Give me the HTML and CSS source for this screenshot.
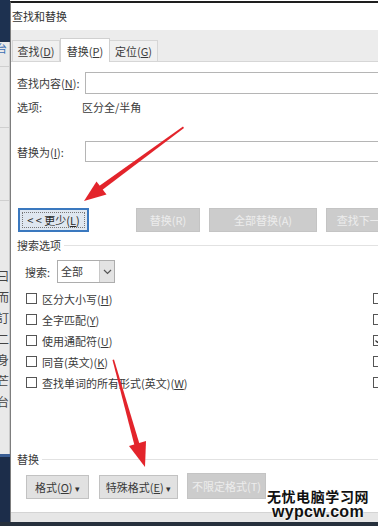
FILE: index.html
```html
<!DOCTYPE html>
<html lang="zh-CN">
<head>
<meta charset="utf-8">
<title>查找和替换</title>
<link rel="stylesheet" href="styles.css">
</head>
<body>
<div class="screen">
  <div class="main">
    <div class="bgapp">
      <div class="bg-nav"></div>
      <div class="bg-body">
        <div class="bg-blue">台</div>
        <div class="bg-line"></div>
        <div class="bg-line l2"></div>
        <div class="bg-line l3"></div>
        <div class="bg-chars">曰<br>而<br>訂<br>二<br>身<br>芒<br>台</div>
      </div>
      <div class="bg-navy"></div>
    </div>
    <div class="dialog">
      <div class="titlebar">查找和替换</div>
      <div class="tabstrip">
        <div class="tab t1">查找(<u>D</u>)</div>
        <div class="tab t2 active">替换(<u>P</u>)</div>
        <div class="tab t3">定位(<u>G</u>)</div>
      </div>
      <div class="panel">
        <div class="field-row first">
          <span class="lbl">查找内容(<u>N</u>):</span>
          <div class="input"></div>
        </div>
        <div class="opt-row">
          <span class="lbl opt">选项:</span>
          <span class="optval">区分全/半角</span>
        </div>
        <div class="field-row second">
          <span class="lbl">替换为(<u>I</u>):</span>
          <div class="input"></div>
        </div>
        <div class="btn-row">
          <button class="btn focus b-less">&lt; &lt; 更少(<u>L</u>)</button>
          <button class="btn dis b-rep">替换(R)</button>
          <button class="btn dis b-all">全部替换(A)</button>
          <button class="btn dis b-next">查找下一处(F)</button>
        </div>
        <div class="group-title gt-search"><span>搜索选项</span><i class="rule"></i></div>
        <div class="search-row">
          <span class="search-lbl">搜索:</span>
          <div class="select"><span class="sel-val">全部</span><span class="sel-arrow"><svg width="9" height="6" viewBox="0 0 9 6"><path d="M1 1 L4.5 4.5 L8 1" fill="none" stroke="#555" stroke-width="1.2"/></svg></span></div>
        </div>
        <div class="checks">
          <div class="col-left">
            <div class="chk-row"><span class="box"></span>区分大小写(<u>H</u>)</div>
            <div class="chk-row"><span class="box"></span>全字匹配(<u>Y</u>)</div>
            <div class="chk-row"><span class="box"></span>使用通配符(<u>U</u>)</div>
            <div class="chk-row"><span class="box"></span>同音(英文)(<u>K</u>)</div>
            <div class="chk-row"><span class="box"></span>查找单词的所有形式(英文)(<u>W</u>)</div>
          </div>
          <div class="col-right">
            <div class="chk-row"><span class="box"></span>区分前缀(<u>X</u>)</div>
            <div class="chk-row"><span class="box"></span>区分后缀(<u>T</u>)</div>
            <div class="chk-row"><span class="box checked"><svg width="9" height="9" viewBox="0 0 9 9"><path d="M1.5 4.5 L3.5 6.5 L7.5 2" fill="none" stroke="#333" stroke-width="1.2"/></svg></span>区分全/半角(<u>M</u>)</div>
            <div class="chk-row"><span class="box"></span>忽略标点符号(<u>S</u>)</div>
            <div class="chk-row"><span class="box"></span>忽略空格(<u>W</u>)</div>
          </div>
        </div>
        <div class="group-title gt-replace"><span>替换</span><i class="rule"></i></div>
        <div class="btn-row2">
          <button class="btn norm b-fmt">格式(<u>O</u>) <span class="caret">▾</span></button>
          <button class="btn norm b-spec">特殊格式(<u>E</u>) <span class="caret">▾</span></button>
          <button class="btn dis b-nofmt">不限定格式(T)</button>
        </div>
      </div>
      <div class="dialog-foot"></div>
    </div>
  </div>
  <div class="taskbar"></div>

  <svg class="arrows" width="378" height="526" viewBox="0 0 378 526">
    <polygon points="183,126.5 184,128 101.5,190.5 98.5,186.5" fill="#e3242b"/>
    <polygon points="84,201 96.5,181.5 106.5,194.5" fill="#e3242b"/>
    <polygon points="112.5,360 114,359.5 139.5,444 134.5,445.5" fill="#e3242b"/>
    <polygon points="145,467 129,446 146,441" fill="#e3242b"/>
  </svg>

  <div class="watermark">
    <div class="wm-cn">无忧电脑学习网</div>
    <div class="wm-en">wypcw.com</div>
  </div>
</div>
</body>
</html>
```

FILE: styles.css
```css
* { box-sizing: border-box; }
html, body { margin: 0; padding: 0; }
body {
  width: 378px;
  height: 526px;
  overflow: hidden;
  background: #fff;
  font-family: "Noto Sans CJK SC", "Microsoft YaHei", sans-serif;
  font-size: 11px;
  color: #3a3a3a;
}
u { text-decoration: underline; text-underline-offset: 1px; }

.screen {
  position: relative;
  width: 378px;
  height: 526px;
  overflow: hidden;
  display: flex;
  flex-direction: column;
}
.main {
  display: flex;
  flex: 1;
  min-height: 0;
}

/* background application strip on the left */
.bgapp {
  flex: 0 0 10px;
  display: flex;
  flex-direction: column;
  overflow: hidden;
  background: #e9e9e9;
}
.bg-nav { height: 42px; background: #1d3150; }
.bg-body {
  flex: 1;
  position: relative;
  overflow: hidden;
  border-right: 1px solid #c9c9c9;
}
.bg-blue {
  color: #3c6fb4;
  font-size: 11px;
  line-height: 12px;
  margin: 0 0 0 -4px;
}
.bg-line { height: 1px; background: #cfcfcf; margin-top: 12px; }
.bg-line.l2 { margin-top: 60px; }
.bg-line.l3 { margin-top: 72px; }
.bg-chars {
  margin: 64px 0 0 -3px;
  color: #444;
  font-size: 12px;
  line-height: 21px;
}
.bg-navy {
  height: 68px;
  background: #1c2d4a;
  border-top: 3px solid #3a5d93;
}

/* dialog */
.dialog {
  flex: 0 0 430px;
  display: flex;
  flex-direction: column;
  border-top: 2px solid #1e1e1e;
  margin-top: 1px;
  border-left: 1px solid #7d7d7d;
  background: #fff;
}
.titlebar {
  height: 27px;
  line-height: 27px;
  padding-left: 1px;
  font-size: 11px;
  color: #333;
  background: #fff;
}
.tabstrip {
  height: 31px;
  background: #ececec;
  display: flex;
  align-items: flex-end;
  padding-left: 1px;
}
.tab {
  height: 21px;
  line-height: 20px;
  text-align: center;
  background: #f0f0f0;
  border: 1px solid #d6d6d6;
  border-bottom: none;
  color: #3a3a3a;
  font-size: 11px;
}
.tab.t1 { width: 48px; }
.tab.t2 { width: 50px; }
.tab.t3 { width: 48px; border-left: none; }
.tab.active {
  height: 24px;
  line-height: 24px;
  background: #fff;
  border-color: #d0d0d0;
  margin-bottom: -1px;
  position: relative;
  z-index: 1;
}

.panel {
  flex: 1;
  border-top: 1px solid #d6d6d6;
  padding-left: 6px;
  display: flex;
  flex-direction: column;
  background: #fff;
}
.field-row {
  display: flex;
  align-items: center;
}
.field-row.first { margin-top: 10px; height: 22px; }
.field-row.second { margin-top: 27px; height: 21px; }
.lbl { width: 68px; flex: 0 0 68px; white-space: nowrap; }
.input {
  flex: 1;
  height: 100%;
  border: 1px solid #b5b5b5;
  background: #fff;
}
.opt-row {
  margin-top: 6px;
  height: 14px;
  line-height: 14px;
  display: flex;
}
.lbl.opt { width: 65px; flex: 0 0 65px; }

.btn {
  font-family: inherit;
  font-size: 11px;
  height: 24px;
  padding: 0;
  margin: 0;
  white-space: nowrap;
  text-align: center;
}
.btn-row {
  margin-top: 46px;
  display: flex;
  height: 24px;
}
.btn.focus {
  background: #dfe7f0;
  border: 2px solid #3a78bf;
  color: #2a2a2a;
  outline: 1px dotted #777;
  outline-offset: -5px;
}
.btn.dis {
  background: #cccccc;
  border: 1px solid #c4c4c4;
  color: #ececec;
}
.btn.norm {
  background: #e1e1e1;
  border: 1px solid #c2c2c2;
  color: #3a3a3a;
}
.b-less { width: 71px; margin-left: 1px; }
.b-rep { width: 64px; margin-left: 47px; }
.b-all { width: 108px; margin-left: 9px; }
.b-next { width: 90px; margin-left: 9px; }

.group-title {
  display: flex;
  align-items: center;
  height: 14px;
  line-height: 14px;
}
.group-title .rule {
  flex: 1;
  height: 1px;
  background: #e2e2e2;
  margin-left: 3px;
}
.gt-search { margin-top: 6px; }
.gt-replace { margin-top: 59px; }

.search-row {
  margin-top: 8px;
  height: 23px;
  display: flex;
  align-items: center;
  padding-left: 8px;
}
.search-lbl { width: 32px; }
.select {
  width: 58px;
  height: 23px;
  border: 1px solid #adadad;
  display: flex;
  background: #fff;
}
.sel-val { flex: 1; line-height: 21px; padding-left: 3px; }
.sel-arrow {
  width: 15px;
  background: #e3e3e3;
  border-left: 1px solid #c8c8c8;
  display: flex;
  align-items: center;
  justify-content: center;
}

.checks {
  margin-top: 5px;
  display: flex;
  padding-left: 9px;
}
.col-left { width: 347px; }
.chk-row {
  height: 21px;
  display: flex;
  align-items: center;
  white-space: nowrap;
}
.box {
  width: 11px;
  height: 11px;
  border: 1px solid #555;
  background: #fff;
  margin-right: 5px;
  flex: 0 0 11px;
  display: flex;
  align-items: center;
  justify-content: center;
}

.btn-row2 {
  margin-top: 9px;
  display: flex;
  height: 24px;
  padding-left: 9px;
}
.b-fmt { width: 63px; }
.b-spec { width: 79px; margin-left: 10px; }
.b-nofmt { width: 79px; margin-left: 9px; height: 26px; margin-top: -2px; }
.caret { font-size: 9px; color: #333; }

.dialog-foot {
  height: 10px;
  background: #e6e6e6;
  border-top: 1px solid #d4d4d4;
}
.taskbar {
  height: 4px;
  background: #26303c;
}

.arrows {
  position: absolute;
  left: 0;
  top: 0;
  pointer-events: none;
}

.watermark {
  position: absolute;
  left: 264px;
  top: 489px;
  width: 108px;
  text-align: center;
  color: #111;
  font-weight: bold;
  text-shadow: 0 0 2px #fff, 0 0 2px #fff;
}
.wm-cn {
  font-family: "Noto Sans CJK SC", sans-serif;
  font-size: 14px;
  line-height: 15px;
  letter-spacing: 0.6px;
}
.wm-en {
  font-family: "Liberation Sans", Arial, sans-serif;
  font-size: 16px;
  line-height: 15px;
  letter-spacing: 0.3px;
}
```
